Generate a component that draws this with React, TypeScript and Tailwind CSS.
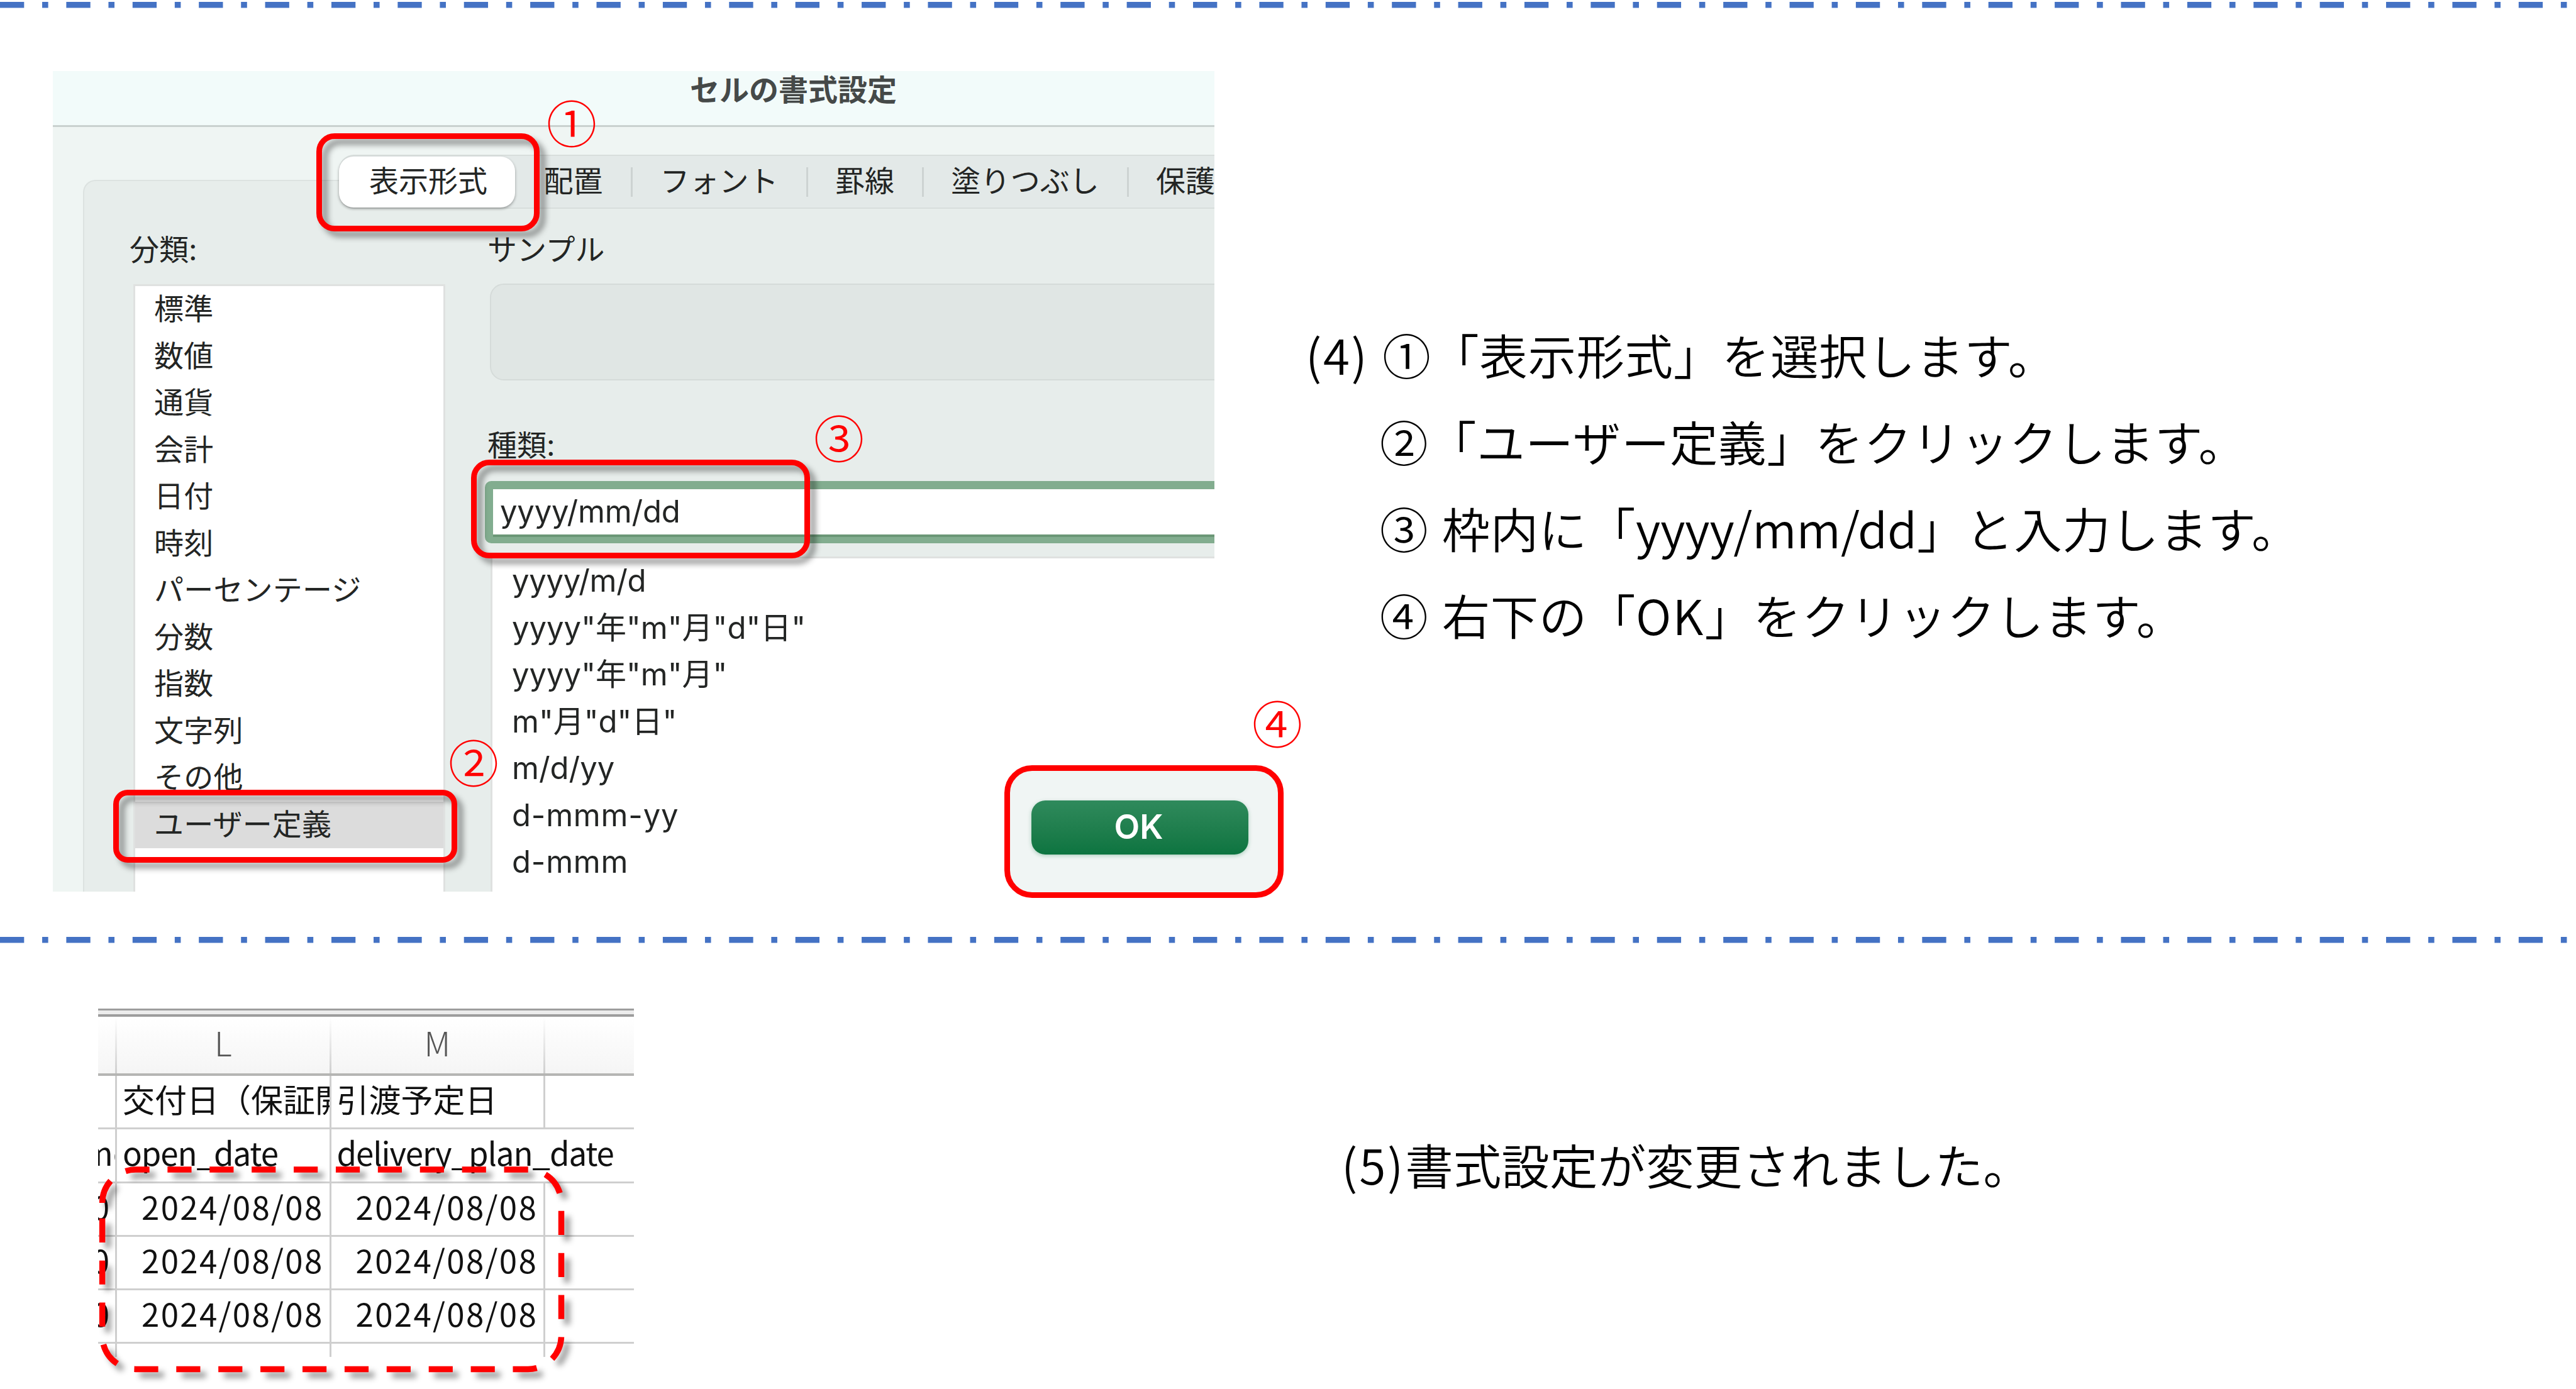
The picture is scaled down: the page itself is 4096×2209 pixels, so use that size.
import type { ReactNode } from "react"
import clsx from "clsx"

const categories = [
    "標準",
    "数値",
    "通貨",
    "会計",
    "日付",
    "時刻",
    "パーセンテージ",
    "分数",
    "指数",
    "文字列",
    "その他",
    "ユーザー定義",
]

const formats = [
    "yyyy/m/d",
    "yyyy\"年\"m\"月\"d\"日\"",
    "yyyy\"年\"m\"月\"",
    "m\"月\"d\"日\"",
    "m/d/yy",
    "d-mmm-yy",
    "d-mmm",
]

const tabs = [
    { label: "配置", width: "w-[185px]" },
    { label: "フォント", width: "w-[279px]" },
    { label: "罫線", width: "w-[184px]" },
    { label: "塗りつぶし", width: "w-[326px]" },
    { label: "保護", width: "w-[184px]" },
]

const dates = ["2024/08/08", "2024/08/08", "2024/08/08"]

function Divider() {
    return (
        <svg className="block h-4 w-full shrink-0" fill="none">
            <line x1="0" y1="7.7" x2="4096" y2="7.7" stroke="#4472c4" strokeWidth="9.5" strokeDasharray="38.32 28.74 9.58 28.75" />
        </svg>
    )
}

function Marker({ className, children }: { className: string; children: ReactNode }) {
    return (
        <span className={clsx("absolute z-20 flex h-[80px] w-[80px] items-center justify-center text-[80px] leading-none font-[350] text-[#ff0000]", className)}>
            {children}
        </span>
    )
}

function RedFrame({ className, shadow = true }: { className: string; shadow?: boolean }) {
    return (
        <div
            className={clsx(
                "absolute z-20 border-[9.5px] border-[#ff0000]",
                shadow && "drop-shadow-[9px_9px_5px_rgba(0,0,0,0.4)]",
                className
            )}
        />
    )
}

function TabBar() {
    return (
        <div className="relative z-10 ml-[455px] flex h-[86px] shrink-0 items-center rounded-l-[24px] border-y-2 border-[#d8dedc] bg-[#e3e9e8] leading-[42px]">
            <div className="flex h-[81px] w-[280px] shrink-0 items-center justify-center rounded-[23px] bg-white pb-[3px] pl-1 shadow-[0_2px_4px_rgba(0,0,0,0.35)]">
                表示形式
            </div>
            {tabs.map((tab, i) => (
                <div key={tab.label} className={clsx("relative flex h-[47px] shrink-0 items-center justify-center pb-[2px]", tab.width)}>
                    {tab.label}
                    {i < tabs.length - 1 && <span className="absolute top-0 -right-[2px] h-[47px] w-[3px] bg-[#cdd3d2]" />}
                </div>
            ))}
        </div>
    )
}

function FormatDialog() {
    return (
        <div className="flex h-[1305px] w-[1847px] flex-col overflow-hidden bg-[#eff5f3] text-[47px] leading-none whitespace-nowrap text-[#232524] [font-family:Inter,'Noto_Sans_CJK_JP',sans-serif]">
            {/* title bar */}
            <div className="flex h-[89px] shrink-0 border-b-[3px] border-[#c9d1cf] bg-[#f2fbfa] pt-[5px] pl-[1013px] font-bold text-[#454948]">
                <span className="leading-[50px]">セルの書式設定</span>
            </div>

            <div className="flex grow flex-col pt-[44px]">
                <TabBar />

                {/* group box */}
                <div className="-mt-[46px] ml-[48px] flex h-[1132px] shrink-0 rounded-tl-[20px] border-t-2 border-l-2 border-[#dce2e0] bg-[#e7edeb] pt-[79px]">
                    <div className="ml-[78px] w-[496px] shrink-0">
                        <div className="-ml-[6px] leading-[60px]">分類:</div>
                        <div className="mt-[25px] h-[1000px] border-3 border-[#dfe1e0] bg-white">
                            {categories.map((name) => (
                                <div key={name} className={clsx("h-[74.5px] pl-[30px] leading-[72px] tracking-[0.2px]", name === "ユーザー定義" && "bg-[#dcdcdc]")}>
                                    {name}
                                </div>
                            ))}
                        </div>
                    </div>

                    <div className="ml-[71px] w-[1200px] shrink-0">
                        <div className="-ml-[4px] leading-[60px]">サンプル</div>
                        <div className="mt-[24px] h-[154px] rounded-[22px] border-2 border-[#d5dbd9] bg-[#e0e6e4]" />
                        <div className="mt-[73px] -ml-[4px] leading-[60px]">種類:</div>
                        <div className="mt-[27px] -ml-[8px] h-[99px] rounded-[10px] bg-[#82ad8f] py-[13px] pl-[13px]">
                            <div className="h-[76px] border-b-4 border-[#6b9777] bg-white pl-[11px] text-[49px] leading-[72px] tracking-[-0.2px]">yyyy/mm/dd</div>
                        </div>
                        <div className="mt-[21px] ml-[1px] h-[560px] border-t-3 border-l-3 border-[#dfe1e0] bg-white text-[49px]">
                            {formats.map((format) => (
                                <div
                                    key={format}
                                    className={clsx(
                                        "h-[74.5px] pl-[31px] leading-[71px]",
                                        format.includes("-") && "tracking-[0.8px]",
                                        format === "yyyy/m/d" && "tracking-[-0.3px]"
                                    )}
                                >
                                    {format}
                                </div>
                            ))}
                        </div>
                    </div>
                </div>
            </div>
        </div>
    )
}

function SheetRow({ first, cells, align, open }: { first: string; cells: [string, string]; align: string; open?: boolean }) {
    return (
        <div className="flex h-[85.25px] border-b-3 border-[#cfcfcf] leading-[73px]">
            <div className="flex w-[30px] shrink-0 justify-end overflow-hidden border-r-3 border-[#cfcfcf]">
                <span className={first === "me" ? "-mr-[25px]" : "mr-[9px]"}>{first}</span>
            </div>
            <div className={clsx("w-[340.5px] shrink-0 overflow-hidden border-r-3 border-[#cfcfcf]", align)}>{cells[0]}</div>
            <div className={clsx("w-[340.5px] shrink-0", align, !open && "border-r-3 border-[#cfcfcf]")}>{cells[1]}</div>
        </div>
    )
}

function Sheet() {
    return (
        <div className="h-[554px] w-[852px] overflow-hidden text-[51px] whitespace-nowrap text-[#111]">
            <div className="h-[13px] border-t-3 border-b-4 border-[#9d9d9d] bg-[#ececec]" />
            {/* column letters */}
            <div className="flex h-[94px] border-b-4 border-[#b5b5b3] bg-linear-to-b from-white to-[#f5f5f5] text-[53px] leading-[81px] font-light text-[#555]">
                <div className="w-[27px]" />
                <div className="w-[3px] bg-linear-to-b from-white to-[#cfcfcf]" />
                <div className="w-[337.5px] text-center">L</div>
                <div className="w-[3px] bg-linear-to-b from-white to-[#cfcfcf]" />
                <div className="w-[337.5px] text-center">M</div>
                <div className="w-[3px] bg-linear-to-b from-white to-[#cfcfcf]" />
            </div>
            <SheetRow first="" cells={["交付日（保証開始日）", "引渡予定日"]} align="pl-[9px]" />
            <SheetRow first="me" cells={["open_date", "delivery_plan_date"]} align="pl-[9px] tracking-[-1.1px]" open />
            {dates.map((date, i) => (
                <SheetRow key={i} first="0" cells={[date, date]} align="pr-[9px] text-right tracking-[2.3px]" />
            ))}
            <SheetRow first="" cells={["", ""]} align="" />
        </div>
    )
}

export default function App() {
    return (
        <div className="flex h-[2209px] w-[4096px] flex-col overflow-hidden bg-white text-black [font-family:'Noto_Sans_CJK_JP',sans-serif]" lang="ja">
            <Divider />

            {/* step 4 */}
            <section className="flex h-[1471px] shrink-0 pt-[97px] pl-[84px]">
                <div className="relative h-[1305px] w-[1847px] shrink-0">
                    <FormatDialog />

                    <RedFrame className="top-[99px] left-[419px] h-[156px] w-[355px] rounded-[29px]" />
                    <RedFrame className="top-[1143px] left-[96px] h-[116px] w-[547px] rounded-[23px]" />
                    <RedFrame className="top-[618px] left-[665px] h-[157px] w-[539px] rounded-[29px]" />
                    <RedFrame className="top-[1104px] left-[1513px] h-[210.5px] w-[444px] rounded-[44px] bg-[#f0f5f4]" shadow={false} />
                    <button className="absolute top-[1160px] left-[1556px] z-20 h-[86px] w-[345px] rounded-[22px] bg-linear-to-b from-[#2f8a5c] to-[#0c7440] pr-[4px] pb-[2px] text-[53px] leading-[80px] font-semibold text-white shadow-[0_2px_6px_rgba(12,116,64,0.3)] [font-family:Inter,sans-serif]">
                        OK
                    </button>

                    <Marker className="top-[39px] left-[785px]">①</Marker>
                    <Marker className="top-[1056px] left-[629px]">②</Marker>
                    <Marker className="top-[540px] left-[1210px]">③</Marker>
                    <Marker className="top-[994px] left-[1907px]">④</Marker>
                </div>

                <div className="ml-[145px] pt-[381px] text-[76.6px] leading-[138px] font-[350] tracking-[0.5px] whitespace-nowrap">
                    <p>
                        <span className="mr-[4px] tracking-[2.6px]">(4)</span> ①「表示形式」を選択します。
                    </p>
                    <p className="pl-[118px]">②「ユーザー定義」をクリックします。</p>
                    <p className="pl-[118px]">
                        <span className="mr-[4px]">③</span> 枠内に「<span className="tracking-[-0.1px]">yyyy/mm/dd</span>」と入力します。
                    </p>
                    <p className="pl-[118px]">
                        <span className="mr-[4px]">④</span> 右下の「<span className="tracking-[2px]">OK</span>」をクリックします。
                    </p>
                </div>
            </section>

            <Divider />

            {/* step 5 */}
            <section className="flex grow pt-[101px] pl-[156px]">
                <div className="relative h-[554px] w-[852px] shrink-0">
                    <Sheet />
                    <svg
                        className="absolute top-0 left-0 overflow-visible drop-shadow-[9px_9px_5px_rgba(0,0,0,0.4)]"
                        width="852"
                        height="590"
                        fill="none"
                        stroke="#ff0000"
                        strokeWidth="9.5"
                        strokeDasharray="38.2 28.7"
                    >
                        <path d="M6.6 309a52.9 52.9 0 0 1 52.9-52.9H683.6a52.9 52.9 0 0 1 52.9 52.9V520.5a52.9 52.9 0 0 1-52.9 52.9H59.5a52.9 52.9 0 0 1-52.9-52.9Z" />
                    </svg>
                </div>

                <p className="ml-[1125px] pt-[178px] text-[76.6px] leading-[138px] font-[350] whitespace-nowrap">
                    <span className="tracking-[2.8px]">(5)</span>書式設定が変更されました。
                </p>
            </section>
        </div>
    )
}
